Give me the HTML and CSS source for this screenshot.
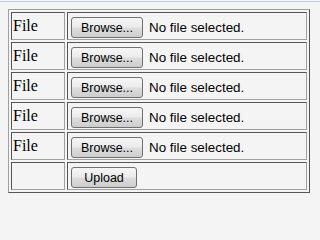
FILE: index.html
```html
<!DOCTYPE html>
<html>
<head>
<meta charset="utf-8">
<link rel="stylesheet" href="styles.css">
</head>
<body>
<div class="topline"></div>
<table class="upload-table">
  <tr>
    <td class="label">File</td>
    <td class="field"><div class="file-input"><button class="btn btn-browse">Browse...</button><span class="status">No file selected.</span></div></td>
  </tr>
  <tr>
    <td class="label">File</td>
    <td class="field"><div class="file-input"><button class="btn btn-browse">Browse...</button><span class="status">No file selected.</span></div></td>
  </tr>
  <tr>
    <td class="label">File</td>
    <td class="field"><div class="file-input"><button class="btn btn-browse">Browse...</button><span class="status">No file selected.</span></div></td>
  </tr>
  <tr>
    <td class="label">File</td>
    <td class="field"><div class="file-input"><button class="btn btn-browse">Browse...</button><span class="status">No file selected.</span></div></td>
  </tr>
  <tr>
    <td class="label">File</td>
    <td class="field"><div class="file-input"><button class="btn btn-browse">Browse...</button><span class="status">No file selected.</span></div></td>
  </tr>
  <tr>
    <td class="label"></td>
    <td class="field"><div class="file-input"><button class="btn btn-upload">Upload</button></div></td>
  </tr>
</table>
</body>
</html>
```
FILE: styles.css
```css
html, body {
  margin: 0;
  padding: 0;
  background: #f4f4f4;
}
body {
  padding-top: 1px;
}
.topline {
  height: 1px;
  background: #c3cedc;
}
.upload-table {
  margin: 7px 0 0 8px;
  border-collapse: separate;
  border-spacing: 2px;
  border-width: 1px;
  border-style: solid;
  border-color: #a0a0a0 #555555 #555555 #a0a0a0;
  width: 302px;
}
.upload-table td {
  padding: 1px;
  height: 24px;
  border-width: 1px;
  border-style: solid;
  border-color: #555555 #a0a0a0 #a0a0a0 #555555;
  vertical-align: top;
}
.label {
  width: 50px;
  font-family: "Liberation Serif", "Times New Roman", serif;
  font-size: 16px;
  line-height: 24px;
  padding-top: 2px;
  height: 23px;
  color: #000;
}
.field {
  width: 236px;
}
.file-input {
  display: flex;
  align-items: center;
  height: 24px;
  box-sizing: border-box;
  padding: 3px 0 0 2px;
}
.btn {
  height: 21px;
  margin: 0;
  padding: 0;
  box-sizing: border-box;
  border: 1px solid #707070;
  border-radius: 3px;
  background: linear-gradient(#f6f6f6 0%, #ececec 45%, #dcdcdc 55%, #cdcdcd 100%);
  font-family: "Liberation Sans", Arial, sans-serif;
  font-size: 12.5px;
  color: #000;
  text-align: center;
}
.btn-browse {
  width: 72px;
}
.btn-upload {
  width: 66px;
}
.status {
  margin-left: 6px;
  font-family: "Liberation Sans", Arial, sans-serif;
  font-size: 13.4px;
  line-height: 16px;
  color: #000;
}
```
